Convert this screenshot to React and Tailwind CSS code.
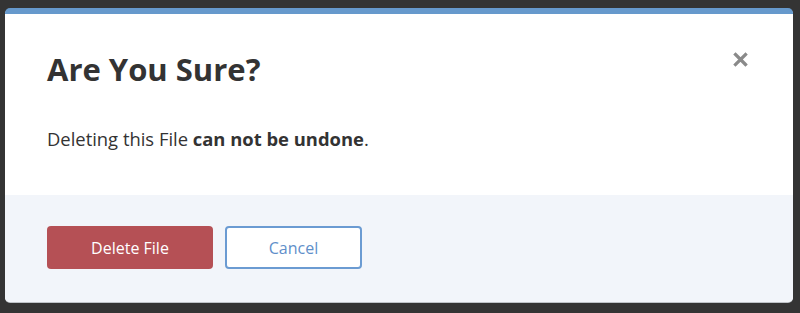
import React from "react";

const App = () => {
  return (
    <div
      className="h-[313px] w-[800px] bg-[#343434] pt-[8px] pl-[5px] pr-[7px]"
      style={{ fontFamily: '"Open Sans", sans-serif' }}
    >
      <div className="h-[294px] flex flex-col overflow-hidden rounded-[5px] border-t-[6px] border-[#6699cc] bg-white shadow-[0_1px_0_#bfc3c8]">
        <div className="relative h-[181px] px-[42px] pt-[35px]">
          <h1 className="text-[31px] font-bold leading-[40px] text-[#333]">
            Are You Sure?
          </h1>
          <p className="mt-[36px] text-[18.4px] leading-[28px] text-[#333]">
            Deleting this File <strong className="font-bold">can not be undone</strong>.
          </p>
          <button className="absolute right-[45px] top-[38px] text-[#8a8a8a]">
            <svg width="15" height="15" viewBox="0 0 15 15">
              <path
                d="M2.5 2.5 L12.5 12.5 M12.5 2.5 L2.5 12.5"
                stroke="currentColor"
                strokeWidth="3.2"
                strokeLinecap="square"
              />
            </svg>
          </button>
        </div>
        <div className="flex flex-1 items-start gap-[12px] bg-[#f2f5fa] px-[42px] pt-[31px]">
          <button className="h-[43px] w-[166px] rounded-[4px] bg-[#b55055] text-[16px] text-white">
            Delete File
          </button>
          <button className="h-[43px] w-[137px] rounded-[4px] border-2 border-[#6b9bd2] bg-white text-[16px] text-[#5f8fca]">
            Cancel
          </button>
        </div>
      </div>
    </div>
  );
};

export default App;
